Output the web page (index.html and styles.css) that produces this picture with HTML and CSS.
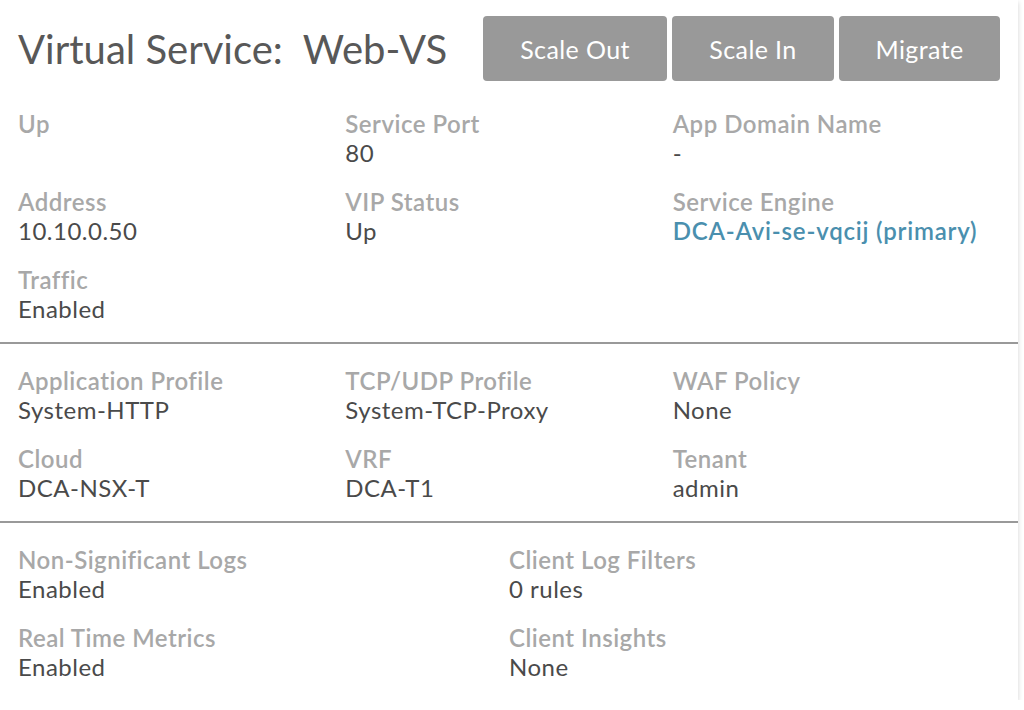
FILE: index.html
```html
<!DOCTYPE html>
<html lang="en">
<head>
    <meta charset="UTF-8">
    <title>Virtual Service: Web-VS</title>
    <link rel="stylesheet" href="styles.css">
</head>
<body>
    <div class="panel">
        <div class="panel-header">
            <h1 class="title">Virtual Service:&nbsp; Web-VS</h1>
            <div class="actions">
                <button class="btn btn-scale-out">Scale Out</button>
                <button class="btn btn-scale-in">Scale In</button>
                <button class="btn btn-migrate">Migrate</button>
            </div>
        </div>

        <div class="section cols-3 first">
            <div class="field">
                <div class="label">Up</div>
                <div class="value"></div>
            </div>
            <div class="field">
                <div class="label">Service Port</div>
                <div class="value">80</div>
            </div>
            <div class="field">
                <div class="label">App Domain Name</div>
                <div class="value">-</div>
            </div>
            <div class="field">
                <div class="label">Address</div>
                <div class="value">10.10.0.50</div>
            </div>
            <div class="field">
                <div class="label">VIP Status</div>
                <div class="value">Up</div>
            </div>
            <div class="field">
                <div class="label">Service Engine</div>
                <div class="value link">DCA-Avi-se-vqcij (primary)</div>
            </div>
            <div class="field">
                <div class="label">Traffic</div>
                <div class="value">Enabled</div>
            </div>
        </div>

        <div class="section cols-3">
            <div class="field">
                <div class="label">Application Profile</div>
                <div class="value">System-HTTP</div>
            </div>
            <div class="field">
                <div class="label">TCP/UDP Profile</div>
                <div class="value">System-TCP-Proxy</div>
            </div>
            <div class="field">
                <div class="label">WAF Policy</div>
                <div class="value">None</div>
            </div>
            <div class="field">
                <div class="label">Cloud</div>
                <div class="value">DCA-NSX-T</div>
            </div>
            <div class="field">
                <div class="label">VRF</div>
                <div class="value">DCA-T1</div>
            </div>
            <div class="field">
                <div class="label">Tenant</div>
                <div class="value">admin</div>
            </div>
        </div>

        <div class="section cols-2">
            <div class="field">
                <div class="label">Non-Significant Logs</div>
                <div class="value">Enabled</div>
            </div>
            <div class="field">
                <div class="label">Client Log Filters</div>
                <div class="value">0 rules</div>
            </div>
            <div class="field">
                <div class="label">Real Time Metrics</div>
                <div class="value">Enabled</div>
            </div>
            <div class="field">
                <div class="label">Client Insights</div>
                <div class="value">None</div>
            </div>
        </div>
    </div>
</body>
</html>
```

FILE: styles.css
```css
:root {
    --title-color: #585858;
    --label-color: #a8a8a8;
    --value-color: #4a4a4a;
    --link-color: #4a8fae;
    --button-color: #999;
    --rule-color: #999;
}

body {
    margin: 0;
    background-color: #fff;
    font-family: 'Lato', 'Open Sans', sans-serif;
    color: var(--value-color);
}

.panel {
    width: 1018px;
    background-color: #fff;
    box-shadow: 0 2px 5px rgba(0,0,0,0.18);
}

.panel-header {
    display: flex;
    align-items: center;
    justify-content: space-between;
    padding: 16px 18px 0 18px;
}

.title {
    margin: 0;
    font-size: 40px;
    font-weight: normal;
    color: var(--title-color);
}

.actions {
    display: flex;
    gap: 5px;
}

.btn {
    height: 65px;
    border: none;
    border-radius: 4px;
    background-color: var(--button-color);
    color: #fff;
    font-family: inherit;
    font-size: 25px;
    letter-spacing: 0.4px;
    padding: 0;
}

.btn-scale-out { width: 184px; }
.btn-scale-in { width: 162px; }
.btn-migrate { width: 161px; }

.section {
    display: grid;
    row-gap: 20px;
    padding: 22px 18px 19px 18px;
    border-bottom: 2px solid var(--rule-color);
}

.section:last-child {
    border-bottom: none;
}

.section.first {
    padding-top: 28px;
}

.cols-3 {
    grid-template-columns: repeat(3, 1fr);
}

.cols-2 {
    grid-template-columns: repeat(2, 1fr);
}

.label,
.value {
    font-size: 24px;
    line-height: 29px;
    height: 29px;
    letter-spacing: 0.5px;
    white-space: nowrap;
}

.label {
    color: var(--label-color);
    font-weight: 600;
}

.value {
    color: var(--value-color);
}

.link {
    color: var(--link-color);
    font-weight: 600;
    letter-spacing: 0.8px;
}
```
